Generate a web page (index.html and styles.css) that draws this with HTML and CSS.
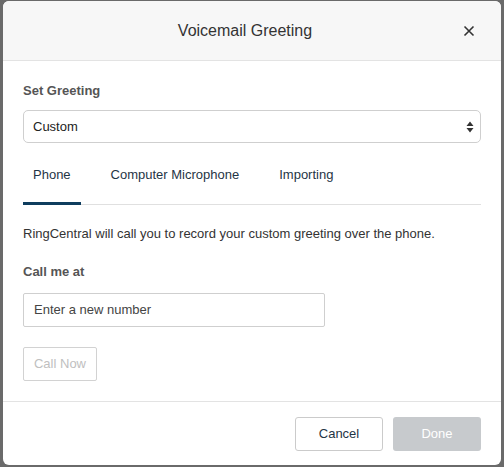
FILE: index.html
```html
<!DOCTYPE html>
<html>
<head>
<meta charset="utf-8">
<link rel="stylesheet" href="styles.css">
</head>
<body>
<div class="dialog">
  <div class="header">
    <div class="title">Voicemail Greeting</div>
    <svg class="close" width="12" height="12" viewBox="0 0 12 12"><path d="M1.5 1.5 L10.5 10.5 M10.5 1.5 L1.5 10.5" stroke="#333" stroke-width="1.6" fill="none"/></svg>
  </div>
  <div class="content">
    <div class="label first">Set Greeting</div>
    <div class="select">
      <span>Custom</span>
      <svg class="arrows" width="8" height="12" viewBox="0 0 8 12"><path d="M4 0.5 L7.5 5 L0.5 5 Z M4 11.5 L7.5 7 L0.5 7 Z" fill="#333"/></svg>
    </div>
    <div class="tabs">
      <div class="tab active">Phone</div>
      <div class="tab">Computer Microphone</div>
      <div class="tab">Importing</div>
    </div>
    <p class="desc">RingCentral will call you to record your custom greeting over the phone.</p>
    <div class="label">Call me at</div>
    <div class="input">Enter a new number</div>
    <div class="callnow">Call Now</div>
  </div>
  <div class="footer">
    <div class="btn cancel">Cancel</div>
    <div class="btn done">Done</div>
  </div>
</div>
</body>
</html>
```
FILE: styles.css
```css
html, body {
  margin: 0;
  padding: 0;
  height: 100%;
  background: #6a6a6a;
  font-family: "Liberation Sans", Arial, sans-serif;
  overflow: hidden;
}
.dialog {
  margin: 1px 3px 0 3px;
  width: 498px;
  height: 464px;
  background: #fff;
  border-radius: 6px;
  overflow: hidden;
  display: flex;
  flex-direction: column;
}
.header {
  height: 59px;
  background: #f7f7f7;
  border-bottom: 1px solid #e3e3e3;
  position: relative;
  display: flex;
  align-items: center;
  justify-content: center;
  padding-right: 14px;
}
.title {
  font-size: 16px;
  color: #333;
  margin-top: 1px;
}
.close {
  position: absolute;
  right: 26px;
  top: 24px;
}
.content {
  padding: 0 20px;
  height: 340px;
  border-bottom: 1px solid #e3e3e3;
}
.label {
  font-size: 13px;
  font-weight: bold;
  color: #555;
  line-height: 16px;
}
.label.first {
  margin-top: 22px;
}
.select {
  margin-top: 11px;
  height: 31px;
  border: 1px solid #cfcfcf;
  border-radius: 5px;
  display: flex;
  align-items: center;
  justify-content: space-between;
  padding: 0 6px 0 9px;
  font-size: 13px;
  color: #222;
}
.tabs {
  margin-top: 12px;
  display: flex;
  gap: 20px;
  border-bottom: 1px solid #e0e0e0;
}
.tab {
  padding: 11px 10px 20px;
  font-size: 13px;
  line-height: 17px;
  color: #1f3545;
  border-bottom: 2px solid transparent;
  margin-bottom: -1px;
}
.tab.active {
  border-bottom: 3px solid #0e3d5e;
  padding-bottom: 19px;
}
.desc {
  margin: 21px 0 0;
  font-size: 13px;
  line-height: 16px;
  color: #333;
}
.label + .input {
  margin-top: 13px;
}
.desc + .label {
  margin-top: 22px;
}
.input {
  width: 290px;
  height: 32px;
  border: 1px solid #cfcfcf;
  border-radius: 2px;
  font-size: 13px;
  color: #444;
  line-height: 32px;
  padding-left: 10px;
}
.callnow {
  margin-top: 20px;
  width: 72px;
  height: 32px;
  border: 1px solid #d2d2d2;
  border-radius: 2px;
  font-size: 13px;
  color: #c0c0c0;
  line-height: 32px;
  text-align: center;
}
.footer {
  display: flex;
  justify-content: flex-end;
  gap: 10px;
  padding: 15px 20px 0;
}
.btn {
  width: 86px;
  height: 32px;
  border-radius: 3px;
  font-size: 13px;
  line-height: 32px;
  text-align: center;
}
.cancel {
  border: 1px solid #cbcbcb;
  color: #1f3545;
}
.done {
  width: 88px;
  height: 34px;
  line-height: 34px;
  background: #c7cacd;
  color: #fff;
}
```
